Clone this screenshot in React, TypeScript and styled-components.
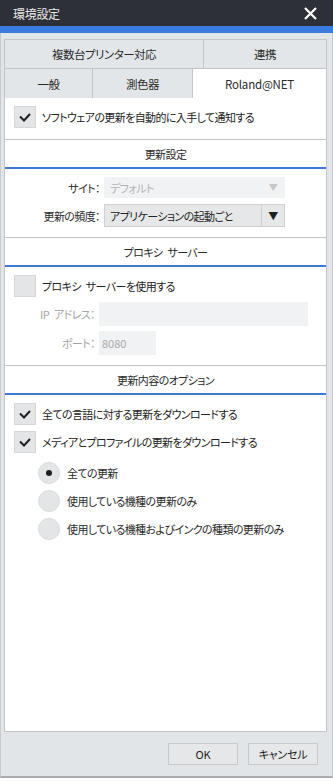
import styled, { createGlobalStyle } from "styled-components";

const GlobalStyle = createGlobalStyle`
  html, body {
    margin: 0;
    padding: 0;
    background: #ffffff;
  }
  body {
    font-family: "Noto Sans CJK JP", "Noto Sans", sans-serif;
    font-feature-settings: "palt";
    color: #222;
  }
`;

const Tab = ({ label, active }: { label: string; active?: boolean }) => (
  <TabCell $active={active}>{label}</TabCell>
);

const Check = ({ checked }: { checked?: boolean }) => (
  <CheckBox>
    {checked && (
      <svg width="12" height="9" viewBox="0 0 12 9">
        <path d="M1 3.5 L5 7.5 L11 1" fill="none" stroke="#222" strokeWidth="2" />
      </svg>
    )}
  </CheckBox>
);

const App = () => {
  return (
    <Window>
      <GlobalStyle />
      <TitleBar>
        <Title>環境設定</Title>
        <svg width="13" height="13" viewBox="0 0 13 13">
          <path d="M1 1 L12 12 M12 1 L1 12" stroke="#fff" strokeWidth="2.2" />
        </svg>
      </TitleBar>
      <AccentBar />
      <Body>
        <TabRow $cols="199px 1fr">
          <Tab label="複数台プリンター対応" />
          <Tab label="連携" />
        </TabRow>
        <TabRow $cols="88px 100px 1fr">
          <Tab label="一般" />
          <Tab label="測色器" />
          <Tab label="Roland@NET" active />
        </TabRow>
        <Panel>
          <TopCheck>
            <Check checked />
            <span>ソフトウェアの更新を自動的に入手して通知する</span>
          </TopCheck>

          <SectionHeader>更新設定</SectionHeader>
          <Section>
            <FieldRow $labelWidth={86}>
              <FieldLabel $disabled={false}>サイト：</FieldLabel>
              <Select $disabled $width={181}>
                <span>デフォルト</span>
                <Arrow $disabled>▼</Arrow>
              </Select>
            </FieldRow>
            <FieldRow $labelWidth={86}>
              <FieldLabel $disabled={false}>更新の頻度：</FieldLabel>
              <Select $width={181}>
                <span>アプリケーションの起動ごと</span>
                <ArrowButton>▼</ArrowButton>
              </Select>
            </FieldRow>
          </Section>

          <SectionHeader>{"プロキシ\u2002サーバー"}</SectionHeader>
          <Section $gap={5}>
            <CheckRow>
              <Check />
              <span>{"プロキシ\u2002サーバーを使用する"}</span>
            </CheckRow>
            <FieldRow $labelWidth={81}>
              <FieldLabel $disabled>{"IP\u2002アドレス："}</FieldLabel>
              <Input $width={209} />
            </FieldRow>
            <FieldRow $labelWidth={81}>
              <FieldLabel $disabled>ポート：</FieldLabel>
              <Input $width={57}>8080</Input>
            </FieldRow>
          </Section>

          <SectionHeader>更新内容のオプション</SectionHeader>
          <Section>
            <CheckRow>
              <Check checked />
              <span>全ての言語に対する更新をダウンロードする</span>
            </CheckRow>
            <CheckRow>
              <Check checked />
              <span>メディアとプロファイルの更新をダウンロードする</span>
            </CheckRow>
            <RadioGroup>
              <RadioRow>
                <Radio $selected />
                <span>全ての更新</span>
              </RadioRow>
              <RadioRow>
                <Radio />
                <span>使用している機種の更新のみ</span>
              </RadioRow>
              <RadioRow>
                <Radio />
                <span>使用している機種およびインクの種類の更新のみ</span>
              </RadioRow>
            </RadioGroup>
          </Section>
        </Panel>
        <Footer>
          <Button>OK</Button>
          <Button>キャンセル</Button>
        </Footer>
      </Body>
    </Window>
  );
};

export default App;

const Window = styled.div`
  width: 333px;
  height: 782px;
  display: flex;
  flex-direction: column;
  background: #e2e5e8;
  box-sizing: border-box;
  border-bottom: 4px solid #ffffff;
  font-size: 11px;
  letter-spacing: -0.6px;
`;

const TitleBar = styled.div`
  height: 26px;
  background: #2d3036;
  display: flex;
  align-items: center;
  justify-content: space-between;
  padding: 0 16px 0 13px;
  flex-shrink: 0;
`;

const Title = styled.div`
  color: #e8e8e8;
  font-size: 12px;
  letter-spacing: -0.3px;
`;

const AccentBar = styled.div`
  height: 7px;
  background: #3b7be0;
  flex-shrink: 0;
`;

const Body = styled.div`
  flex: 1;
  display: flex;
  flex-direction: column;
  padding: 6px 5px 0 3px;
  border-left: 1px solid #c9cbce;
  border-right: 1px solid #c9cbce;
  border-bottom: 2px solid #a9abae;
  min-height: 0;
`;

const TabRow = styled.div<{ $cols: string }>`
  display: grid;
  grid-template-columns: ${({ $cols }) => $cols};
  height: 29px;
  border-top: 1px solid #c2c4c7;
  border-left: 1px solid #c2c4c7;
  border-right: 1px solid #c2c4c7;
  &:first-child {
    height: 28px;
  }
`;

const TabCell = styled.div<{ $active?: boolean }>`
  display: flex;
  align-items: center;
  justify-content: center;
  background: ${({ $active }) => ($active ? "#ffffff" : "#e3e6e9")};
  border-right: 1px solid #c2c4c7;
  color: #2a2a2a;
  font-size: 11.5px;
  letter-spacing: ${({ $active }) => ($active ? "-0.2px" : "-0.5px")};
  &:last-child {
    border-right: none;
  }
`;

const Panel = styled.div`
  flex: 1;
  background: #ffffff;
  border: 1px solid #c2c4c7;
  border-top: none;
  display: flex;
  flex-direction: column;
`;

const CheckRow = styled.div`
  display: flex;
  align-items: center;
  gap: 6px;
  height: 22px;
  color: #222;
`;

const TopCheck = styled(CheckRow)`
  padding: 8px 0 0 9px;
  margin-bottom: 11px;
`;

const CheckBox = styled.div`
  width: 22px;
  height: 22px;
  background: #e4e5e7;
  border: 1px solid #d6d7d9;
  box-sizing: border-box;
  display: flex;
  align-items: center;
  justify-content: center;
  flex-shrink: 0;
`;

const SectionHeader = styled.div`
  height: 27px;
  border-top: 1px solid #c2c4c7;
  border-bottom: 2px solid #3d7ad8;
  display: flex;
  align-items: center;
  justify-content: center;
  color: #2a2a2a;
`;

const Section = styled.div<{ $gap?: number }>`
  display: flex;
  flex-direction: column;
  gap: ${({ $gap }) => $gap ?? 6}px;
  padding: 8px 0 10px 9px;
`;

const FieldRow = styled.div<{ $labelWidth: number }>`
  display: grid;
  grid-template-columns: ${({ $labelWidth }) => $labelWidth}px auto;
  align-items: center;
  column-gap: 4px;
`;

const FieldLabel = styled.div<{ $disabled: boolean }>`
  text-align: right;
  color: ${({ $disabled }) => ($disabled ? "#a5a5a5" : "#2a2a2a")};
`;

const Select = styled.div<{ $disabled?: boolean; $width: number }>`
  width: ${({ $width }) => $width}px;
  height: ${({ $disabled }) => ($disabled ? 21 : 23)}px;
  box-sizing: border-box;
  display: flex;
  align-items: center;
  justify-content: space-between;
  padding-left: 5px;
  background: ${({ $disabled }) => ($disabled ? "#f1f2f3" : "#e6e7e9")};
  border: 1px solid ${({ $disabled }) => ($disabled ? "#f1f2f3" : "#cfd0d2")};
  color: ${({ $disabled }) => ($disabled ? "#b3b3b3" : "#222")};
`;

const Arrow = styled.span<{ $disabled?: boolean }>`
  width: 22px;
  text-align: center;
  font-size: 9px;
  color: ${({ $disabled }) => ($disabled ? "#c8c8c8" : "#222")};
`;

const ArrowButton = styled.span`
  width: 22px;
  height: 100%;
  border-left: 1px solid #cfd0d2;
  display: flex;
  align-items: center;
  justify-content: center;
  font-size: 10px;
  color: #1e1e1e;
`;

const Input = styled.div<{ $width: number }>`
  width: ${({ $width }) => $width}px;
  height: 24px;
  background: #f1f2f3;
  display: flex;
  align-items: center;
  padding-left: 3px;
  box-sizing: border-box;
  color: #a9a9a9;
  letter-spacing: 0;
`;

const RadioGroup = styled.div`
  display: flex;
  flex-direction: column;
  gap: 5px;
  padding-left: 24px;
  margin-top: 2px;
`;

const RadioRow = styled.div`
  display: flex;
  align-items: center;
  gap: 7px;
  height: 23px;
  color: #2a2a2a;
`;

const Radio = styled.div<{ $selected?: boolean }>`
  width: 22px;
  height: 22px;
  border-radius: 50%;
  background: #e4e5e7;
  border: 1px solid #dadbdd;
  box-sizing: border-box;
  display: flex;
  align-items: center;
  justify-content: center;
  &::after {
    content: "";
    width: 6px;
    height: 6px;
    border-radius: 50%;
    background: ${({ $selected }) => ($selected ? "#1e1e1e" : "transparent")};
  }
`;

const Footer = styled.div`
  height: 44px;
  display: flex;
  align-items: center;
  justify-content: flex-end;
  gap: 10px;
  padding-right: 9px;
  flex-shrink: 0;
`;

const Button = styled.div`
  width: 70px;
  height: 22px;
  box-sizing: border-box;
  background: #e6e7e9;
  border: 1px solid #c9cacc;
  display: flex;
  align-items: center;
  justify-content: center;
  color: #222;
  letter-spacing: -0.2px;
`;
